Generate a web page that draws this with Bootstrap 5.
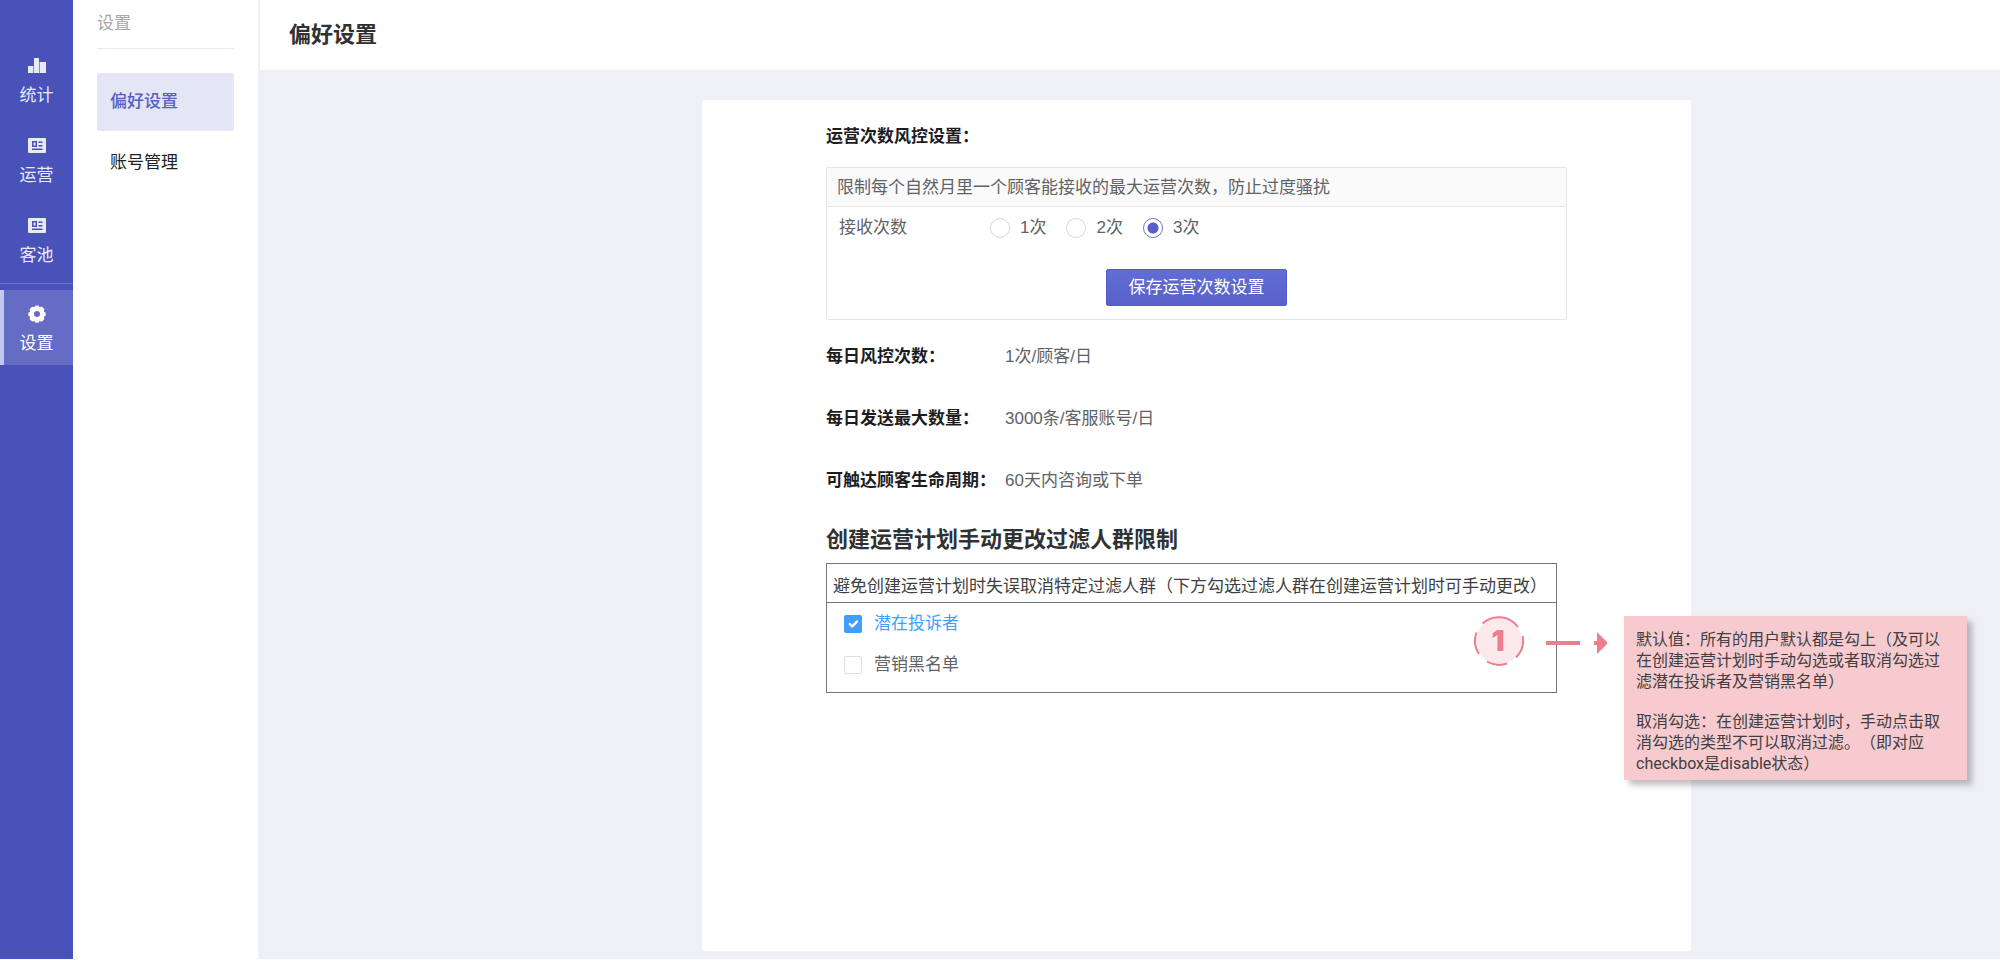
<!DOCTYPE html>
<html lang="zh-CN">
<head>
<meta charset="utf-8">
<meta name="viewport" content="width=device-width, initial-scale=1">
<title>偏好设置</title>
<link href="https://cdn.jsdelivr.net/npm/bootstrap@5.3.0/dist/css/bootstrap.min.css" rel="stylesheet">
<style>
  body { font-family: "Liberation Sans", "Noto Sans CJK SC", sans-serif; font-size: 17px; line-height: 24px; color: #606266; background: #fff; }
  .page { min-height: 100vh; padding: 0 2px 1px 0; }
  .rail { width: 73px; background: #4852b8; padding-top: 49px; }
  .rail a { color: #e8eaf8; height: 80px; padding-top: 7px; gap: 8px; text-decoration: none; }
  .rail a.current { height: 75px; padding-top: 14px; margin-top: 6px; color: #fff; background: #646cc3; border-left: 4px solid #c3c9f3; padding-right: 4px; }
  .rail .split { border-top: 1px solid #6a73c8; margin-top: -6px; }
  .rail svg { width: 20px; height: 20px; }
  .side { width: 187px; padding: 12px 24px; border-right: 2px solid #eff0f6; }
  .side h2 { font-size: 17px; line-height: 24px; font-weight: 400; color: #a8a8a8; padding-bottom: 12px; border-bottom: 1px solid #e9e9f4; margin-bottom: 24px; }
  .side a { color: #222; text-decoration: none; padding: 17px 13px; border-radius: 2px; }
  .side a.current { color: #5560c5; background: #e5e6f5; font-weight: 500; }
  .side a + a { padding-top: 20px; }
  .topbar { height: 70px; padding: 0 29px; }
  .topbar h1, .group-title { font-size: 22px; line-height: 30px; font-weight: 700; color: #303133; margin: 0; }
  .canvas-area { background: #eff0f6; display: grid; grid-template-columns: 442fr 989fr 309fr; padding: 30px 0 8px; }
  .sheet { grid-column: 2; background: #fff; border-radius: 3px; padding: 25px 124px 24px; }
  .label-strong { font-weight: 700; color: #1d1d1f; }
  .limit-box { border: 1px solid #e6e6e6; border-radius: 2px; margin: 18px 0 25px; }
  .limit-box header { background: #fafafa; border-bottom: 1px solid #e6e6e6; padding: 8px 10px 6px; }
  .limit-box .options { padding: 9px 12px; }
  .limit-box .caption { width: 151px; }
  .choice { gap: 10px; margin-right: 20px; }
  .choice input { margin: 0; width: 20px; height: 20px; border: 1px solid #d8d8d8; box-shadow: none !important; }
  .choice input:checked { background: radial-gradient(circle, #5560cc 5px, #fff 6px); border-color: #6d76d6; }
  .btn-save { width: 181px; height: 37px; padding: 0; margin: 20px auto 13px; font-size: 17px; color: #fff; background: linear-gradient(#636dd6, #5761c9); border: 1px solid #525cc6; border-radius: 2px; }
  .facts { row-gap: 38px; }
  .facts dt { width: 179px; }
  .facts dd { margin: 0; }
  .group-title { margin-top: 32px; }
  .filter-box { border: 1px solid #777; color: #404040; margin-top: 8px; margin-right: 10px; min-height: 130px; }
  .filter-box header { border-bottom: 1px solid #777; padding: 11px 6px 3px; white-space: nowrap; }
  .filter-box .ticks { padding: 9px 17px; gap: 17px; }
  .tick { gap: 12px; color: #606266; }
  .tick input { width: 18px; height: 18px; margin: 0; border: 1px solid #dcdfe6; border-radius: 2px !important; }
  .tick input:checked { background-color: #409eff; border-color: #409eff; background-size: 16px; }
  .tick input:checked + span { color: #409eff; }
  .pin { left: calc(100% - 83px); top: 49px; width: 134px; height: 54px; }
  .note { left: calc(100% + 68px); top: 52px; width: 343px; background: #f6cacf; color: #404040; padding: 13px 12px 6px; font-family: Roboto, "Noto Sans CJK SC", sans-serif; font-size: 16px; line-height: 21px; text-spacing-trim: space-all; box-shadow: 5px 5px 6px rgba(0,0,0,.25); }
  .note p { margin: 0 0 19px; }
  .note p:last-child { margin: 0; }
</style>
</head>
<body>
<div class="page d-flex">
  <nav class="rail d-flex flex-column flex-shrink-0" aria-label="主导航">
    <a href="#" class="d-flex flex-column align-items-center">
      <svg viewBox="0 0 20 20" fill="currentColor"><path d="M1 10h5v7H1zM7 2h5v15H7zM13 6h6v11h-6z"/><path d="M6 10h1v7H6zM12 6h1v11h-1z" opacity=".4"/></svg><span>统计</span></a>
    <a href="#" class="d-flex flex-column align-items-center">
      <svg viewBox="0 0 20 20" fill="currentColor"><path fill-rule="evenodd" d="M2 2h16q1 0 1 1v13q0 1-1 1H2q-1 0-1-1V3q0-1 1-1zM5 5v6h5V5zM6.500 6.500h2v3h-2zM11.500 5.500h4V7h-4zM11.500 9h4v1.500h-4zM5 12.500h10.500V14H5z"/></svg><span>运营</span></a>
    <a href="#" class="d-flex flex-column align-items-center">
      <svg viewBox="0 0 20 20" fill="currentColor"><path fill-rule="evenodd" d="M2 2h16q1 0 1 1v13q0 1-1 1H2q-1 0-1-1V3q0-1 1-1zM5 5v6h5V5zM6.500 6.500h2v3h-2zM11.500 5.500h4V7h-4zM11.500 9h4v1.500h-4zM5 12.500h10.500V14H5z"/></svg><span>客池</span></a>
    <div class="split"></div>
    <a href="#" class="current d-flex flex-column align-items-center" aria-current="page">
      <svg viewBox="0 0 20 20" fill="currentColor"><path fill-rule="evenodd" d="M8.500 1.500h3l.7 1.500 2.800-.3 2.300 2.300-.3 2.800 1.700 1v3l-1.700.8.3 2.600-2.300 2.300-2.800-.3-.7 1.500h-3l-.7-1.500-2.800.3L2.700 15.200l.3-2.600-1.700-.8v-3l1.700-1L2.700 5 5 2.700l2.800.3zM10 7a3 3 0 1 0 0 6 3 3 0 0 0 0-6z"/></svg><span>设置</span></a>
  </nav>
  <aside class="side flex-shrink-0">
    <h2>设置</h2>
    <nav class="d-flex flex-column" aria-label="设置">
      <a href="#" class="current" aria-current="page">偏好设置</a>
      <a href="#">账号管理</a>
    </nav>
  </aside>
  <main class="d-flex flex-column flex-grow-1">
    <div class="topbar d-flex align-items-center"><h1>偏好设置</h1></div>
    <div class="canvas-area flex-grow-1">
      <div class="sheet">
        <div class="label-strong">运营次数风控设置：</div>
        <section class="limit-box d-flex flex-column">
          <header>限制每个自然月里一个顾客能接收的最大运营次数，防止过度骚扰</header>
          <div class="options d-flex" role="radiogroup" aria-label="接收次数">
            <span class="caption">接收次数</span>
            <label class="choice d-flex align-items-center"><input class="form-check-input" type="radio" name="times">1次</label>
            <label class="choice d-flex align-items-center"><input class="form-check-input" type="radio" name="times">2次</label>
            <label class="choice d-flex align-items-center"><input class="form-check-input" type="radio" name="times" checked>3次</label>
          </div>
          <button type="button" class="btn btn-save">保存运营次数设置</button>
        </section>
        <dl class="facts d-flex flex-column mb-0">
          <div class="d-flex"><dt class="label-strong">每日风控次数：</dt><dd>1次/顾客/日</dd></div>
          <div class="d-flex"><dt class="label-strong">每日发送最大数量：</dt><dd>3000条/客服账号/日</dd></div>
          <div class="d-flex"><dt class="label-strong">可触达顾客生命周期：</dt><dd>60天内咨询或下单</dd></div>
        </dl>
        <h2 class="group-title">创建运营计划手动更改过滤人群限制</h2>
        <section class="filter-box position-relative">
          <header>避免创建运营计划时失误取消特定过滤人群（下方勾选过滤人群在创建运营计划时可手动更改）</header>
          <div class="ticks d-flex flex-column">
            <label class="tick d-flex align-items-center"><input class="form-check-input" type="checkbox" checked><span>潜在投诉者</span></label>
            <label class="tick d-flex align-items-center"><input class="form-check-input" type="checkbox"><span>营销黑名单</span></label>
          </div>
          <svg class="pin position-absolute" viewBox="0 0 134 54">
            <circle cx="26" cy="28" r="23" fill="#fce9eb"/>
            <g fill="none" stroke="#ee7d8d" stroke-width="2">
              <path d="M9.500 10.500A24 24 0 0 1 45 14M49.700 23A24 24 0 0 1 43 44.500M34 50.500A24 24 0 0 1 14 48.500M6 41A24 24 0 0 1 3.500 19.500"/>
            </g>
            <text x="25" y="38" text-anchor="middle" font-family="Inter, sans-serif" font-weight="900" font-size="29" fill="#ee7d8d">1</text>
            <path d="M73 28h34v4H73zM121 28h3v-9l11 11-11 11v-9h-3z" fill="#ee7d8d"/>
          </svg>
          <div class="note position-absolute">
            <p>默认值：所有的用户默认都是勾上（及可以在创建运营计划时手动勾选或者取消勾选过滤潜在投诉者及营销黑名单）</p>
            <p>取消勾选：在创建运营计划时，手动点击取消勾选的类型不可以取消过滤。（即对应checkbox是disable状态）</p>
          </div>
        </section>
      </div>
    </div>
  </main>
</div>
<script src="https://cdn.jsdelivr.net/npm/bootstrap@5.3.0/dist/js/bootstrap.bundle.min.js"></script>
</body>
</html>
